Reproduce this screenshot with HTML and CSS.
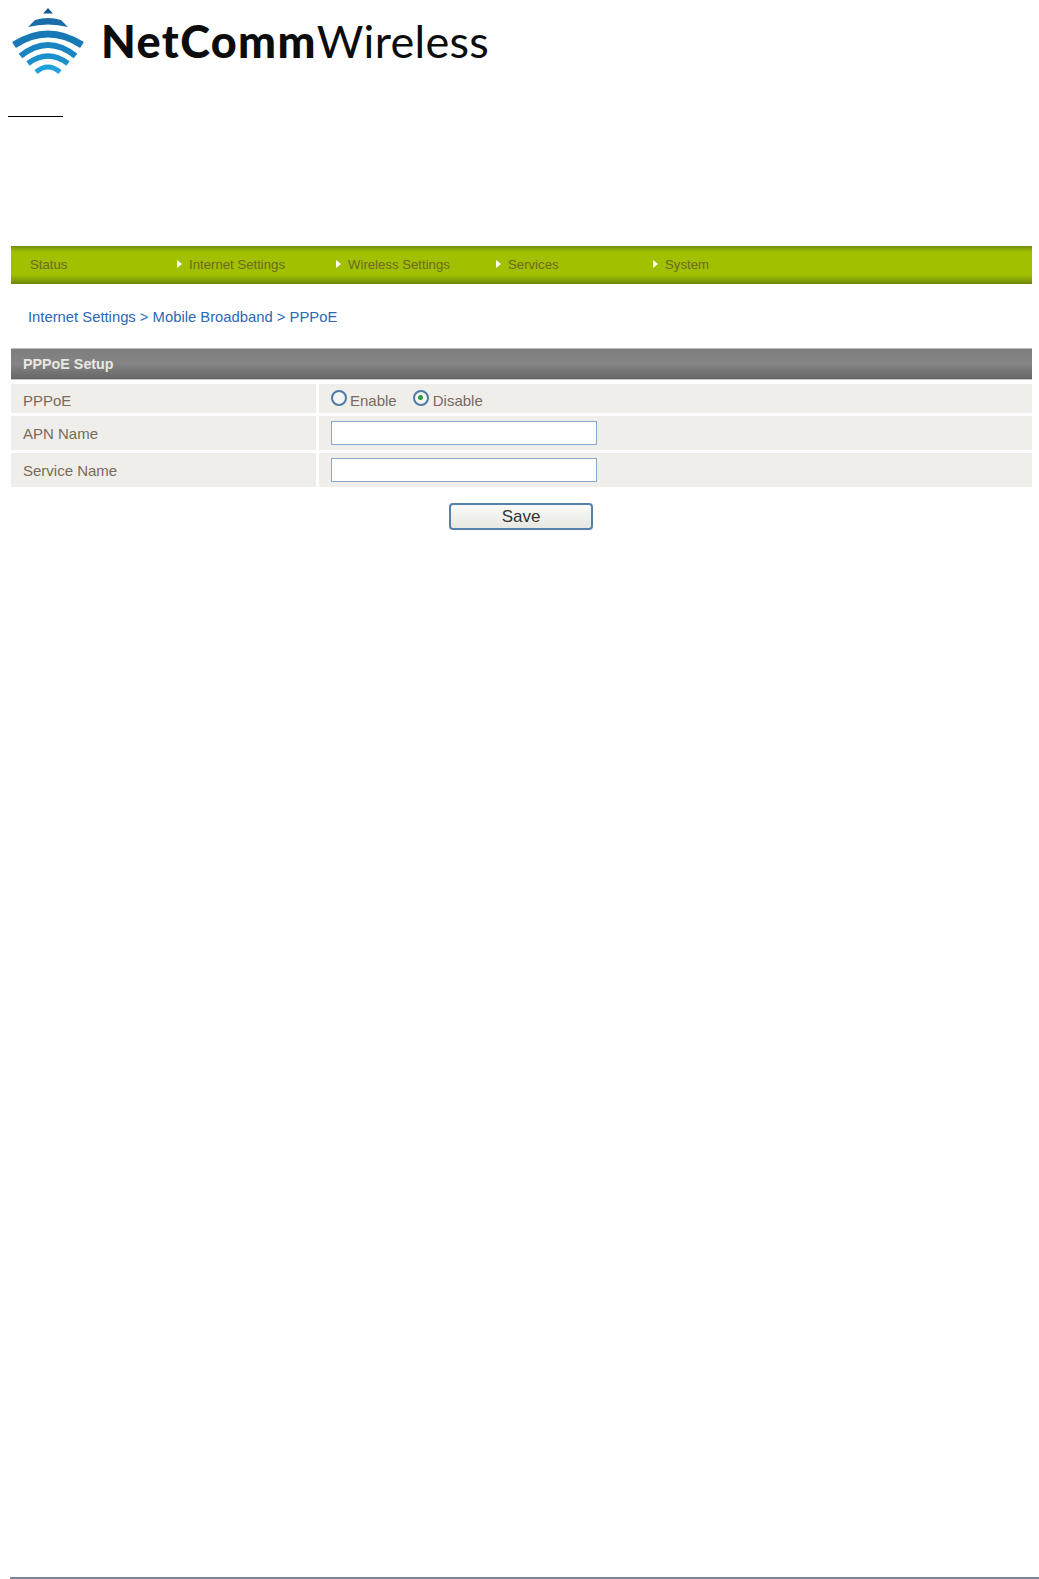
FILE: index.html
```html
<!DOCTYPE html>
<html lang="en">
<head>
<meta charset="utf-8">
<title>PPPoE Setup</title>
<link rel="stylesheet" href="styles.css">
</head>
<body>
  <header class="logo">
    <svg class="logo-mark" width="74" height="66" viewBox="0 0 74 66">
      <path d="M37 0 L42 5.500 L32 5.500 Z" fill="#175c8c"/>
      <path d="M17 19 L24 12 Q37 8 50 12 L57 19 Q37 14 17 19 Z" fill="#1a6ca8"/>
      <path d="M3 37 Q37 15 71 37" class="wave wave-a"/>
      <path d="M9.500 48 Q37 26 64.500 48" class="wave wave-b"/>
      <path d="M17 55.500 Q37 40.500 57 55.500" class="wave wave-c"/>
      <path d="M25 64 Q37 54 49 64" class="wave wave-d"/>
    </svg>
    <div class="logo-name"><b>NetComm</b><span>Wireless</span></div>
  </header>
  <div class="rule-short"></div>

  <nav class="menu">
    <a class="first">Status</a>
    <a class="arrow w159">Internet Settings</a>
    <a class="arrow w160">Wireless Settings</a>
    <a class="arrow w157">Services</a>
    <a class="arrow">System</a>
  </nav>

  <p class="crumbs">Internet Settings &gt; Mobile Broadband &gt; PPPoE</p>

  <h2 class="section">PPPoE Setup</h2>
  <form>
    <div class="row row-radio">
      <label class="name">PPPoE</label>
      <div class="val">
        <span class="radio"></span><span class="opt">Enable</span>
        <span class="radio on"></span><span class="opt">Disable</span>
      </div>
    </div>
    <div class="row">
      <label class="name">APN Name</label>
      <div class="val"><input type="text"></div>
    </div>
    <div class="row">
      <label class="name">Service Name</label>
      <div class="val"><input type="text"></div>
    </div>
    <div class="actions"><button type="button">Save</button></div>
  </form>

  <footer class="rule-foot"></footer>
</body>
</html>
```

FILE: styles.css
```css
html, body { height: 100%; }
body { margin: 0; padding: 0 7px 0 11px; box-sizing: border-box; display: flex; flex-direction: column; background: #fff; font-family: "Liberation Sans", Arial, sans-serif; font-size: 15px; }

.logo { display: flex; align-items: flex-start; height: 116px; padding-top: 8px; box-sizing: border-box; }
.logo-mark { display: block; }
.wave { fill: none; stroke-width: 6; }
.wave-a { stroke: #1678b4; stroke-width: 7; }
.wave-b { stroke: #1a84c2; }
.wave-c { stroke: #1c90cc; stroke-width: 5.500; }
.wave-d { stroke: #20a0dc; stroke-width: 5; }
.logo-name { margin: 5px 0 0 16px; font-family: Lato, sans-serif; font-size: 45px; line-height: 56px; color: #0c0c0c; white-space: nowrap; }
.logo-name b { font-weight: 900; letter-spacing: 1.400px; }
.logo-name span { font-weight: 400; letter-spacing: 0.300px; }
.rule-short { width: 55px; margin-left: -3px; border-top: 1px solid #000; }

.menu { display: flex; height: 38px; margin-top: 129px; padding-bottom: 2px; box-sizing: border-box; align-items: center; background: linear-gradient(#6f8a0c 0, #8aa808 3px, #a0c000 6px, #a0c000 29px, #8aa808 33px, #6b860a 38px); color: #6e6a20; font-size: 13.200px; flex-shrink: 0; }
.menu a { display: block; white-space: nowrap; }
.menu .first { padding-left: 19px; box-sizing: border-box; width: 166px; }
.w159 { width: 159px; }
.w160 { width: 160px; }
.w157 { width: 157px; }
.arrow { box-sizing: border-box; padding-left: 12px; position: relative; }
.arrow::before { content: ""; position: absolute; left: 0; top: 3px; border-left: 5px solid #fff; border-top: 4px solid transparent; border-bottom: 4px solid transparent; }

.crumbs { margin: 24px 0 0 17px; color: #2a68b8; font-size: 14.800px; line-height: 18px; }

.section { margin: 22px 0 0; height: 30px; padding-left: 12px; border-top: 1px solid #bdbdbd; border-bottom: 1px solid #c6c6c6; background: linear-gradient(#7e7e7e, #848484 50%, #666); color: #e8e8e0; font-size: 14.300px; font-weight: bold; line-height: 30px; }

.row { display: flex; gap: 3px; margin-top: 3px; height: 34px; color: #7a6a5c; }
.row-radio { height: 29px; margin-top: 4px; }
.name { width: 293px; padding-left: 12px; background: #efeeea; line-height: 36px; }
.row-radio .name { line-height: 34px; }
.val { flex: 1; display: flex; align-items: center; padding-left: 12px; background: #efeeea; }
.row-radio .val { padding-top: 3px; box-sizing: border-box; }
input { width: 266px; height: 24px; padding: 0; border: 1px solid #8aa8c8; background: #fff; box-sizing: border-box; }
.radio { width: 16px; height: 16px; border: 2px solid #4f7ba6; border-radius: 50%; box-sizing: border-box; background: #f4f4f2; margin-right: 3px; margin-top: -5px; position: relative; }
.radio.on { margin-right: 4px; }
.radio.on::after { content: ""; position: absolute; left: 3.500px; top: 3.500px; width: 5px; height: 5px; border-radius: 50%; background: #2aa040; }
.opt { margin-right: 16px; }

.actions { margin-top: 16px; padding-left: 438px; }
button { width: 144px; height: 27px; border: 2px solid #5581ac; border-radius: 4px; background: linear-gradient(#fafaf8, #e8e8e2); color: #333; font: 17px "Liberation Sans", Arial, sans-serif; padding: 0; }

.rule-foot { margin: auto -7px 0 -1px; border-top: 2px solid #7b8497; }
```
